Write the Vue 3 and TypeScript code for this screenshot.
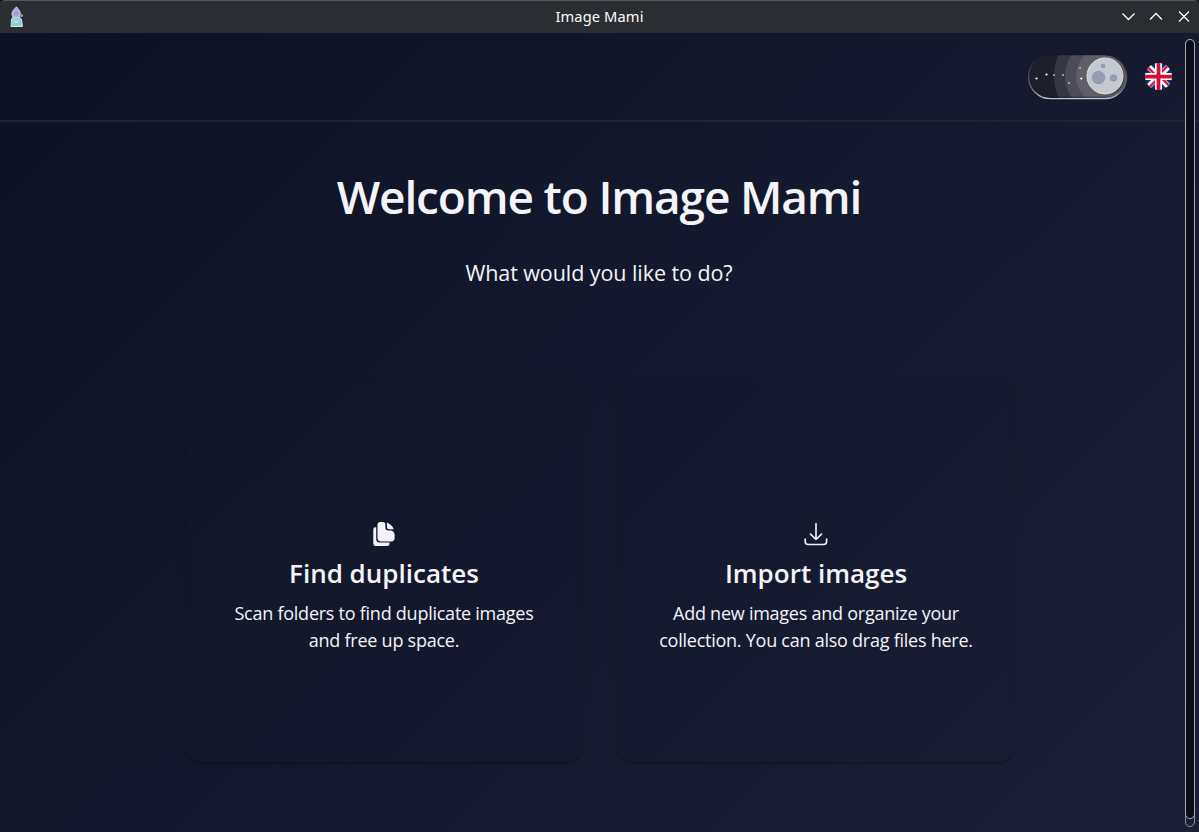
<script setup lang="ts">
interface Action {
  id: 'duplicates' | 'import'
  title: string
  lines: string[]
}

const actions: Action[] = [
  {
    id: 'duplicates',
    title: 'Find duplicates',
    lines: ['Scan folders to find duplicate images', 'and free up space.'],
  },
  {
    id: 'import',
    title: 'Import images',
    lines: ['Add new images and organize your', 'collection. You can also drag files here.'],
  },
]

const halos: number[] = [51, 40, 29]
const stars: [number, number, number][] = [
  [8.5, 24.5, 1.1],
  [18.5, 20.5, 1.1],
  [26, 21, 1],
  [35, 21, 1],
  [52, 14, 1],
  [41, 29, 1],
  [53.3, 24.5, 1.1],
]
</script>

<template>
  <div class="window">
    <header class="titlebar">
      <svg class="app-icon" viewBox="0 0 20 22" width="20" height="22">
        <path d="M5 20.500L5.500 14Q6 11 8.500 10.500L13 11Q15.500 12 15.700 15L16.500 20.500Z" fill="#8fcfd3" stroke="#d9e6ea" />
        <path d="M7 11.500C5.500 9 5.500 6 7.500 4L10.500 0.800L13 4C15 6.500 14.500 9 13 11.500Z" fill="#b8a9dd" stroke="#d9d4ee" stroke-width=".8" />
        <circle cx="10.300" cy="7.500" r="2" fill="#9f98ca" />
        <path d="M8 13Q10 17 13 13L12 17H8.500Z" fill="#b4e6df" />
        <circle cx="15.500" cy="9.500" r="1.500" fill="#a294c4" />
      </svg>
      <span class="window-title">Image Mami</span>
      <svg class="controls" viewBox="0 0 80 20" width="80" height="20">
        <path d="M3.500 6.500L9.500 12.500L15.500 6.500M31 12.500L37 6.500L43 12.500M60 4.500L70 14.500M70 4.500L60 14.500" />
      </svg>
    </header>

    <main class="content">
      <nav class="toolbar">
        <svg class="theme-toggle" viewBox="0 0 100 48" width="100" height="48">
          <defs>
            <clipPath id="pill"><rect x=".5" y="1" width="98" height="43.500" rx="21.750" /></clipPath>
            <linearGradient id="rim" x1="0" y1="0" x2="0" y2="1">
              <stop offset="0" stop-color="#141620" />
              <stop offset=".45" stop-color="#444754" />
              <stop offset=".8" stop-color="#7d808b" />
              <stop offset="1" stop-color="#c2c4cc" />
            </linearGradient>
          </defs>
          <g clip-path="url(#pill)">
            <rect width="100" height="46" fill="#1d1f2c" />
            <circle v-for="r in halos" :key="r" cx="77" cy="22" :r="r" fill="#fff" fill-opacity=".11" />
            <circle v-for="(s, i) in stars" :key="i" :cx="s[0]" :cy="s[1]" :r="s[2]" :fill="i > 1 && i < 6 ? '#b7b8bf' : '#fff'" />
            <rect x="-2" y="-1" width="102" height="45.500" rx="22" class="inner-shade" />
          </g>
          <circle cx="78" cy="23" r="18.500" class="moon-shade" />
          <circle cx="77" cy="22" r="18" fill="#c4c9d1" stroke="#e4e1d2" />
          <circle cx="70.500" cy="23.500" r="6.300" class="crater" />
          <circle cx="75" cy="12" r="2" class="crater" />
          <circle cx="85.500" cy="24" r="3.300" class="crater" />
          <rect x=".5" y=".7" width="98.200" height="44" rx="22" fill="none" stroke="url(#rim)" stroke-width="1.200" />
        </svg>
        <svg class="flag" viewBox="0 0 54 54" width="27" height="27">
          <defs><clipPath id="round"><circle cx="27" cy="27" r="27" /></clipPath></defs>
          <g clip-path="url(#round)">
            <rect width="54" height="54" fill="#0b2f78" />
            <path d="M2 2L52 52M52 2L2 52" stroke="#fff" stroke-width="11" />
            <path d="M0 3L22 25M54 51L32 29M51 0L29 22M3 54L25 32" stroke="#d80c35" stroke-width="4.500" />
            <path d="M27 0V54M0 27H54" stroke="#fff" stroke-width="14" />
            <path d="M27 0V54M0 27H54" stroke="#d80c35" stroke-width="7.500" />
          </g>
        </svg>
      </nav>

      <section class="welcome">
        <h1>Welcome to Image Mami</h1>
        <p class="question">What would you like to do?</p>
        <div class="cards">
          <button v-for="action in actions" :key="action.id" class="card" type="button">
            <svg v-if="action.id === 'duplicates'" class="card-icon" viewBox="0 0 24 26" width="24" height="26">
              <path fill="currentColor" d="M3.300 6.200H4.200V18Q4.200 21.600 7.800 21.600H17.500V22.500Q17.500 25 15 25H3.600Q1.300 25 1.300 22.700V8.400Q1.300 6.200 3.300 6.200Z" />
              <path fill="currentColor" d="M8.300 1H10.800Q13.400 1 13.400 3.600V6.600Q13.400 9.500 16.300 9.500H19.500Q22.600 10.500 22.600 14V17Q22.600 20.400 19.200 20.400H9Q5.500 20.400 5.500 17V3.800Q5.500 1 8.300 1Z" />
              <path fill="currentColor" d="M14.800 1.400Q20 3.300 21.800 8.300H17Q15 8.300 15 6.300V3.500Q15 2.200 14.800 1.400Z" />
            </svg>
            <svg v-else class="card-icon" viewBox="0 0 24 26" width="24" height="26">
              <path fill="none" stroke="currentColor" stroke-width="1.600" stroke-linecap="round" stroke-linejoin="round" d="M12 2.500V18.300M6.500 13.100L12 18.500L17.500 13.100M1.200 18V20.500Q1.200 23.500 4.200 23.500H19.600Q22.600 23.500 22.600 20.500V18" />
            </svg>
            <h2>{{ action.title }}</h2>
            <p class="description"><span v-for="line in action.lines" :key="line">{{ line }}</span></p>
          </button>
        </div>
      </section>

      <div class="scrollbar"><div class="thumb"></div></div>
    </main>
  </div>
</template>

<style>
html,
body {
  margin: 0;
  background: #15181b;
  overflow: hidden;
}
</style>

<style scoped>
.window {
  box-sizing: border-box;
  width: 1199px;
  height: 832px;
  display: flex;
  flex-direction: column;
  border-radius: 5px 5px 0 0;
  overflow: hidden;
  color: #f4f4f8;
  font-family: "Open Sans", "Noto Sans", sans-serif;
}
.titlebar {
  box-sizing: border-box;
  height: 33px;
  flex: none;
  display: grid;
  grid-template-columns: 1fr auto 1fr;
  align-items: center;
  border-top: 1px solid #50555a;
  border-radius: 5px 5px 0 0;
  background: #2a2e32;
}
.app-icon {
  margin: 0 0 1px 6px;
}
.window-title {
  margin-bottom: 2px;
  font: 14.667px/20px "Noto Sans", sans-serif;
  letter-spacing: 0.12px;
  color: #fcfcfc;
}
.controls {
  justify-self: end;
  fill: none;
  stroke: #fcfcfc;
  stroke-width: 1.300;
}
.content {
  position: relative;
  flex: 1;
  background: linear-gradient(135deg, #0d1224 0%, #1b2036 100%);
}
.toolbar {
  box-sizing: border-box;
  height: 89px;
  display: flex;
  justify-content: flex-end;
  align-items: flex-start;
  gap: 17px;
  padding: 21px 27px 0 0;
  border-bottom: 2px solid #1f2437;
}
.flag {
  margin-top: 9px;
}
.inner-shade {
  fill: none;
  stroke: #0b0d16;
  stroke-opacity: 0.3;
  stroke-width: 4;
}
.moon-shade {
  fill: #22242d;
  fill-opacity: 0.55;
}
.crater {
  fill: #959db1;
  stroke: #858da2;
  stroke-width: 0.6;
}
.welcome {
  padding: 39px 185px 0 186px;
  text-align: center;
}
h1,
h2,
p {
  margin: 0;
}
h1 {
  margin-right: 2px;
  font-size: 46px;
  line-height: 70px;
  font-weight: 600;
  letter-spacing: -1.15px;
  white-space: nowrap;
}
.question {
  margin: 26px 2px 0 0;
  font-size: 21.500px;
  line-height: 32px;
  letter-spacing: -0.07px;
  white-space: nowrap;
}
.cards {
  display: grid;
  grid-template-columns: 396px 396px;
  gap: 36px;
  margin-top: 89px;
}
.card {
  height: 384px;
  display: flex;
  flex-direction: column;
  align-items: center;
  justify-content: center;
  padding: 35px 0 0;
  border: 0;
  border-radius: 16px;
  background: rgba(24, 27, 42, 0.12);
  box-shadow: 0 2px 3px rgba(0, 0, 0, 0.24);
  color: inherit;
  font-family: inherit;
}
.card-icon {
  display: block;
}
h2 {
  margin-top: 6px;
  font-size: 26px;
  line-height: 40px;
  font-weight: 600;
  white-space: nowrap;
}
.description {
  margin-top: 7px;
  font-size: 18px;
  line-height: 27px;
  letter-spacing: -0.25px;
  white-space: nowrap;
}
.description span {
  display: block;
}
.scrollbar {
  position: absolute;
  box-sizing: border-box;
  top: 6px;
  right: 4px;
  bottom: 5px;
  width: 10px;
  border: 1px solid #8e909a;
  border-radius: 5px;
}
.thumb {
  box-sizing: border-box;
  height: 780px;
  margin: -1px;
  border: 1px solid #a9abb4;
  border-radius: 5px;
  background: #0b0d18;
}
</style>
